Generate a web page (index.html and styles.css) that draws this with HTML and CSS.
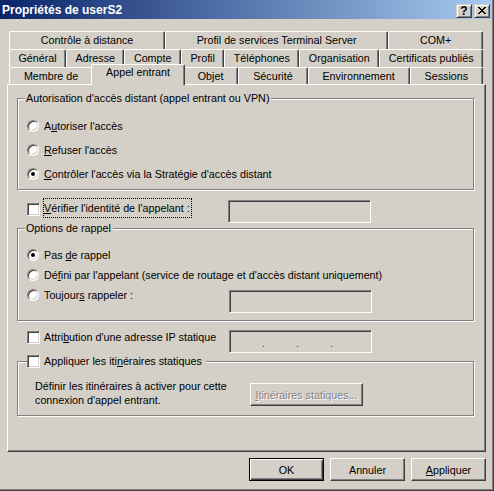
FILE: index.html
```html
<!DOCTYPE html>
<html lang="fr">
<head>
<meta charset="utf-8">
<title>Propriétés de userS2</title>
<link rel="stylesheet" href="styles.css">
</head>
<body>
<div class="window">
  <div class="titlebar">
    <span class="title">Propriétés de userS2</span>
    <div class="caption-buttons">
      <span class="cap-btn help">?</span>
      <span class="cap-btn close"><svg width="8" height="7" viewBox="0 0 8 7" shape-rendering="crispEdges"><path d="M0 0h2v1h-2z M6 0h2v1h-2z M1 1h2v1h-2z M5 1h2v1h-2z M2 2h4v1h-4z M3 3h2v1h-2z M2 4h4v1h-4z M1 5h2v1h-2z M5 5h2v1h-2z M0 6h2v1h-2z M6 6h2v1h-2z" fill="#000"/></svg></span>
    </div>
  </div>

  <div class="content">
    <div class="tabs">
      <div class="tab-row">
        <div class="tab">Contrôle à distance</div>
        <div class="tab">Profil de services Terminal Server</div>
        <div class="tab">COM+</div>
      </div>
      <div class="tab-row">
        <div class="tab">Général</div>
        <div class="tab">Adresse</div>
        <div class="tab">Compte</div>
        <div class="tab">Profil</div>
        <div class="tab">Téléphones</div>
        <div class="tab">Organisation</div>
        <div class="tab">Certificats publiés</div>
      </div>
      <div class="tab-row front">
        <div class="tab">Membre de</div>
        <div class="tab selected">Appel entrant</div>
        <div class="tab">Objet</div>
        <div class="tab">Sécurité</div>
        <div class="tab">Environnement</div>
        <div class="tab">Sessions</div>
      </div>
    </div>

    <div class="panel">
      <fieldset class="group group-access">
        <legend class="legend-text">Autorisation d'accès distant (appel entrant ou VPN)</legend>
        <div class="opt opt-24"><span class="radio"></span><span class="lbl">A<u>u</u>toriser l'accès</span></div>
        <div class="opt opt-24"><span class="radio"></span><span class="lbl"><u>R</u>efuser l'accès</span></div>
        <div class="opt opt-24"><span class="radio on"></span><span class="lbl"><u>C</u>ontrôler l'accès via la Stratégie d'accès distant</span></div>
      </fieldset>

      <div class="field-row verify-row">
        <div class="field-label">
          <span class="check"></span><span class="lbl focus"><u>V</u>érifier l'identité de l'appelant :</span>
        </div>
        <div class="textbox"></div>
      </div>

      <fieldset class="group group-callback">
        <legend class="legend-text">Options de rappel</legend>
        <div class="opt opt-20"><span class="radio on"></span><span class="lbl">Pas <u>d</u>e rappel</span></div>
        <div class="opt opt-20"><span class="radio"></span><span class="lbl">Dé<u>f</u>ini par l'appelant (service de routage et d'accès distant uniquement)</span></div>
        <div class="field-row always-row">
          <div class="opt opt-20 opt-flush"><span class="radio"></span><span class="lbl">Toujour<u>s</u> rappeler :</span></div>
          <div class="textbox textbox-down"></div>
        </div>
      </fieldset>

      <div class="field-row ip-row">
        <div class="field-label ip-label">
          <span class="check"></span><span class="lbl">Attri<u>b</u>ution d'une adresse IP statique</span>
        </div>
        <div class="textbox ipbox">
          <span class="ip-seg"></span><span class="ip-dot">.</span><span class="ip-seg"></span><span class="ip-dot">.</span><span class="ip-seg"></span><span class="ip-dot">.</span><span class="ip-seg"></span>
        </div>
      </div>

      <fieldset class="group group-routes">
        <legend class="legend-check"><span class="check"></span><span class="lbl">Appliquer les iti<u>n</u>éraires statiques</span></legend>
        <div class="routes-row">
          <p class="routes-text">Définir les itinéraires à activer pour cette<br>connexion d'appel entrant.</p>
          <div class="btn disabled wide"><span><u>I</u>tinéraires statiques...</span></div>
        </div>
      </fieldset>
    </div>

    <div class="buttons">
      <div class="btn default">OK</div>
      <div class="btn">Annuler</div>
      <div class="btn"><span><u>A</u>ppliquer</span></div>
    </div>
  </div>
</div>
</body>
</html>
```

FILE: styles.css
```css
* { box-sizing: border-box; }

html, body {
  margin: 0;
  padding: 0;
}

body {
  background: #D4D0C8;
  font-family: "Liberation Sans", Arial, sans-serif;
  font-size: 10.75px;
  color: #000;
}

u { text-decoration: underline; text-underline-offset: 1px; }

.window {
  width: 494px;
  height: 491px;
  background: #D4D0C8;
  border-right: 1px solid #404040;
  border-bottom: 1px solid #404040;
  box-shadow: inset -1px -1px #808080;
  display: flex;
  flex-direction: column;
}

/* Title bar */
.titlebar {
  height: 19px;
  flex: none;
  margin-right: 1px;
  background: linear-gradient(to right, #0A246A, #A6CAF0);
  display: flex;
  align-items: center;
  justify-content: space-between;
  padding: 0 2px 0 2px;
}

.title {
  color: #fff;
  font: bold 12px "Liberation Sans", Arial, sans-serif;
  line-height: 14px;
  white-space: nowrap;
}

.caption-buttons {
  display: flex;
  gap: 2px;
  margin-top: 2px;
}

.cap-btn {
  width: 16px;
  height: 14px;
  background: #D4D0C8;
  border: 1px solid;
  border-color: #D4D0C8 #404040 #404040 #D4D0C8;
  box-shadow: inset 1px 1px #fff, inset -1px -1px #808080;
  display: flex;
  align-items: center;
  justify-content: center;
}

.help {
  font: bold 12px "Liberation Sans", Arial, sans-serif;
  line-height: 12px;
  color: #000;
}

/* Content */
.content {
  padding: 12px 0 0 7px;
}

.tabs {
  margin-left: 2px;
  width: 474px;
}

.tab-row {
  display: flex;
  height: 18px;
}

.tab-row.front {
  height: 17px;
}

.tab {
  flex: 1 1 auto;
  padding: 0 6px;
  border-top: 1px solid #fff;
  border-left: 1px solid #fff;
  border-right: 1px solid #404040;
  border-radius: 2px 2px 0 0;
  box-shadow: inset -1px 0 #808080;
  background: #D4D0C8;
  text-align: center;
  line-height: 16px;
  white-space: nowrap;
}

.tab.selected {
  position: relative;
  z-index: 1;
  height: 21px;
  margin: -3px -2px 0;
  line-height: 15px;
}

/* Panel */
.panel {
  width: 479px;
  height: 368px;
  border: 1px solid;
  border-color: #fff #404040 #404040 #fff;
  box-shadow: inset -1px -1px #808080;
  padding: 0 11px 0 9px;
}

.group {
  margin: 0;
  padding: 0;
  border: 1px solid #808080;
  box-shadow: inset 1px 1px #fff, 1px 1px #fff;
  min-width: 0;
}

.legend-text {
  margin-left: 7px;
  padding: 0 2px 0 1px;
  line-height: 13px;
  background: #D4D0C8;
}

.legend-check {
  margin-left: 9px;
  padding: 0 4px 0 0;
  line-height: 13px;
  height: 13px;
  display: flex;
  align-items: center;
  background: #D4D0C8;
}

.group-access {
  margin-top: 7px;
  padding: 9px 0 3px;
}

.group-callback {
  margin-top: 0;
  padding: 10px 0 7px;
}

.group-routes {
  margin-top: 3px;
  padding: 11px 0 8px;
}

.opt {
  display: flex;
  align-items: center;
  padding-left: 9px;
  white-space: nowrap;
}

.opt-24 { height: 24px; }
.opt-20 { height: 20px; }
.opt-flush { padding-left: 0; }

.lbl {
  margin-left: 5px;
  white-space: nowrap;
  line-height: 13px;
}

.check + .lbl { margin-left: 4px; }

.radio {
  flex: none;
  position: relative;
  width: 12px;
  height: 12px;
  border-radius: 50%;
  background: #fff;
  border: 1px solid;
  border-color: #808080 #fff #fff #808080;
  box-shadow: inset 1px 1px #404040, inset -1px -1px #D4D0C8;
}

.radio.on::after {
  content: "";
  position: absolute;
  left: 3px;
  top: 3px;
  width: 4px;
  height: 4px;
  border-radius: 50%;
  background: #000;
}

.check {
  flex: none;
  width: 13px;
  height: 13px;
  background: #fff;
  border: 1px solid;
  border-color: #808080 #fff #fff #808080;
  box-shadow: inset 1px 1px #404040, inset -1px -1px #D4D0C8;
}

.textbox {
  height: 23px;
  border: 1px solid;
  border-color: #808080 #fff #fff #808080;
  box-shadow: inset 1px 1px #404040, inset -1px -1px #D4D0C8;
  background: #D4D0C8;
}

/* Rows with a side text box */
.field-row {
  display: grid;
  height: 22px;
}

.verify-row {
  margin: 10px 0 0 10px;
  grid-template-columns: 201px 143px;
}

.verify-row .field-label {
  display: flex;
  align-items: flex-start;
}

.verify-row .check { margin-top: 3px; }

.lbl.focus {
  margin-top: -2px;
  padding: 4px 2px 3px 1px;
  margin-left: 3px;
  outline: 1px dotted #000;
  outline-offset: -1px;
}

.always-row {
  height: auto;
  margin-left: 9px;
  grid-template-columns: 202px 143px;
}

.textbox-down { margin-top: 5px; }

.ip-row {
  margin: 9px 0 0 10px;
  grid-template-columns: 202px 143px;
}

.ip-label {
  display: flex;
  align-items: center;
  height: 13px;
  margin-top: 1px;
}

.ipbox {
  display: flex;
  align-items: center;
  padding-left: 1px;
  padding-top: 4px;
}

.ip-seg { width: 31px; flex: none; }

.ip-dot {
  width: 3px;
  flex: none;
  text-align: center;
  color: #404040;
  line-height: 13px;
}

/* Static routes */
.routes-row {
  display: flex;
  align-items: flex-start;
  padding-left: 17px;
}

.routes-text {
  margin: 0;
  width: 215px;
  line-height: 14px;
  white-space: nowrap;
}

/* Buttons */
.btn {
  width: 75px;
  height: 23px;
  flex: none;
  border: 1px solid;
  border-color: #fff #404040 #404040 #fff;
  box-shadow: inset -1px -1px #808080;
  background: #D4D0C8;
  display: flex;
  align-items: center;
  justify-content: center;
  white-space: nowrap;
}

.btn.default {
  border-color: #000;
  box-shadow: inset 1px 1px #fff, inset -1px -1px #404040, inset -2px -2px #808080;
}

.btn.wide {
  width: 113px;
  margin-top: 4px;
}

.btn.disabled {
  color: #808080;
  text-shadow: 1px 1px #fff;
}

.buttons {
  width: 479px;
  margin-top: 6px;
  display: flex;
  justify-content: flex-end;
  gap: 6px;
}
```
